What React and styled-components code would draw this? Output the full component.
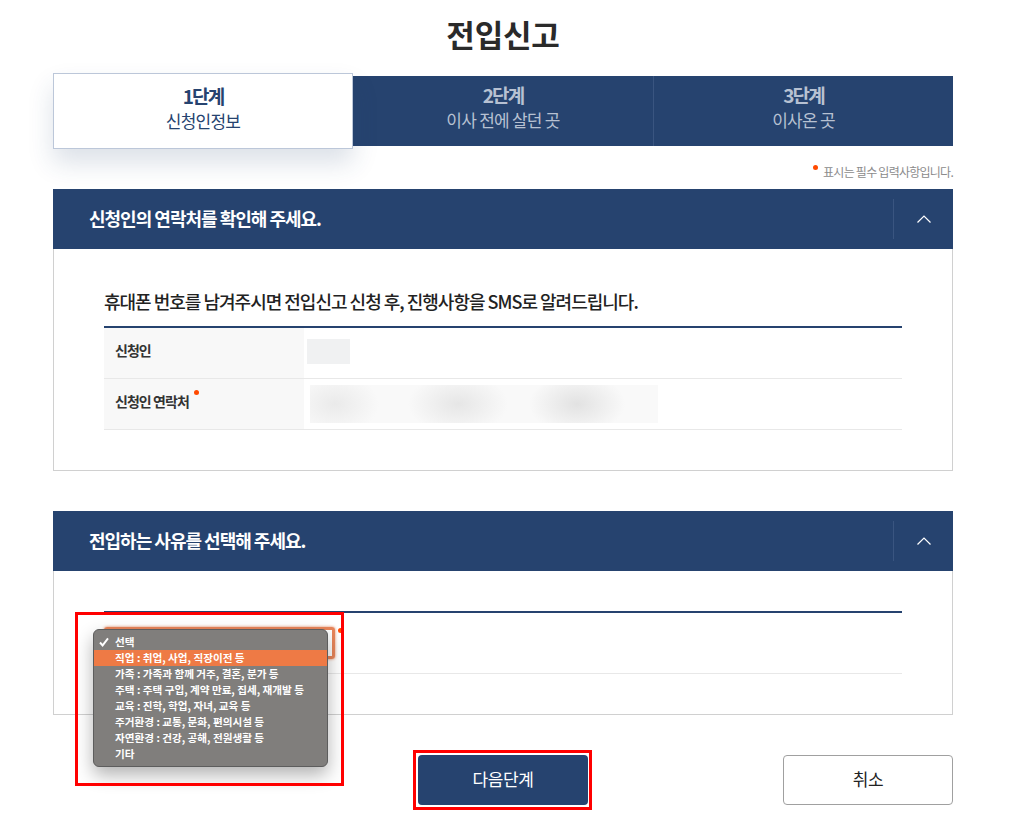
import styled, { createGlobalStyle } from 'styled-components';

const NAVY = '#26436f';
const FONT = `'Noto Sans CJK KR', 'Noto Sans', sans-serif`;

const STEPS = [
  { id: 1, label: '1단계', desc: '신청인정보' },
  { id: 2, label: '2단계', desc: '이사 전에 살던 곳' },
  { id: 3, label: '3단계', desc: '이사온 곳' },
];

const REASONS = [
  '직업 : 취업, 사업, 직장이전 등',
  '가족 : 가족과 함께 거주, 결혼, 분가 등',
  '주택 : 주택 구입, 계약 만료, 집세, 재개발 등',
  '교육 : 진학, 학업, 자녀, 교육 등',
  '주거환경 : 교통, 문화, 편의시설 등',
  '자연환경 : 건강, 공해, 전원생활 등',
  '기타',
];

function Chevron() {
  return (
    <svg width="16" height="10" viewBox="0 0 16 10" fill="none">
      <path d="M1.5 8.5 L8 2 L14.5 8.5" stroke="#fff" strokeWidth="1.2" />
    </svg>
  );
}

function CheckMark() {
  return (
    <svg width="10" height="10" viewBox="0 0 10 10" fill="none">
      <path d="M1 5.5 L3.6 8.4 L9 1.4" stroke="#fff" strokeWidth="1.9" />
    </svg>
  );
}

function SectionHeader({ children }) {
  return (
    <Header>
      <HeaderTitle>{children}</HeaderTitle>
      <Toggle>
        <Chevron />
      </Toggle>
    </Header>
  );
}

export default function App() {
  return (
    <Page>
      <GlobalStyle />
      <Title>전입신고</Title>

      <Steps>
        {STEPS.map((s) => (
          <Step key={s.id} $active={s.id === 1}>
            <StepLabel>{s.label}</StepLabel>
            <StepDesc>{s.desc}</StepDesc>
          </Step>
        ))}
      </Steps>

      <Legend>
        <Dot />
        표시는 필수 입력사항입니다.
      </Legend>

      <Section>
        <SectionHeader>신청인의 연락처를 확인해 주세요.</SectionHeader>
        <ContactBody>
          <Lead>휴대폰 번호를 남겨주시면 전입신고 신청 후, 진행사항을 SMS로 알려드립니다.</Lead>
          <Table>
            <Row>
              <Th>신청인</Th>
              <Td>
                <BlurName />
              </Td>
            </Row>
            <Row>
              <Th>
                신청인 연락처
                <LabelDot />
              </Th>
              <Td>
                <BlurPhone />
              </Td>
            </Row>
          </Table>
        </ContactBody>
      </Section>

      <ReasonSection>
        <SectionHeader>전입하는 사유를 선택해 주세요.</SectionHeader>
        <ReasonBody>
          <ReasonRow>
            <SelectBox />
            <SelectDot />
            <Menu>
              <MenuItem>
                <Check>
                  <CheckMark />
                </Check>
                선택
              </MenuItem>
              {REASONS.map((r, i) => (
                <MenuItem key={r} $hover={i === 0}>
                  {r}
                </MenuItem>
              ))}
            </Menu>
            <MenuMark />
          </ReasonRow>
        </ReasonBody>
      </ReasonSection>

      <Actions>
        <NextButton>
          다음단계
          <NextMark />
        </NextButton>
        <CancelButton>취소</CancelButton>
      </Actions>
    </Page>
  );
}

const GlobalStyle = createGlobalStyle`
  html, body {
    margin: 0;
    background: #fff;
    font-family: ${FONT};
    color: #222;
  }
`;

const Page = styled.div`
  width: 900px;
  height: 834px;
  margin-left: 53px;
`;

const Title = styled.h1`
  margin: 0;
  height: 73px;
  padding-top: 11px;
  box-sizing: border-box;
  font-size: 31px;
  line-height: 46px;
  font-weight: 700;
  letter-spacing: -0.2px;
  text-align: center;
  color: #2a2a2a;
`;

const Steps = styled.div`
  display: flex;
  align-items: center;
  height: 76px;
`;

const Step = styled.div`
  box-sizing: border-box;
  width: 300px;
  display: flex;
  flex-direction: column;
  align-items: center;
  height: ${(p) => (p.$active ? '76px' : '70px')};
  padding-top: ${(p) => (p.$active ? '8px' : '5px')};
  background: ${(p) => (p.$active ? '#fff' : NAVY)};
  color: ${(p) => (p.$active ? NAVY : '#b7c1d2')};
  border: ${(p) => (p.$active ? '1px solid #bcc7d9' : 'none')};
  border-left: ${(p) => (p.$active ? '1px solid #bcc7d9' : '1px solid #3a5580')};
  box-shadow: ${(p) => (p.$active ? '0 14px 24px rgba(38, 67, 111, 0.16)' : 'none')};
  position: ${(p) => (p.$active ? 'relative' : 'static')};
  &:nth-child(2) {
    border-left: none;
  }
`;

const StepLabel = styled.strong`
  font-size: 19px;
  line-height: 27px;
  font-weight: 700;
  letter-spacing: -1.9px;
`;

const StepDesc = styled.span`
  font-size: 17px;
  line-height: 23px;
  font-weight: 400;
  letter-spacing: -0.75px;
`;

const Legend = styled.p`
  margin: 0;
  height: 40px;
  padding-top: 14px;
  box-sizing: border-box;
  display: flex;
  justify-content: flex-end;
  font-size: 12px;
  line-height: 18px;
  letter-spacing: -0.75px;
  color: #8b8b8b;
  white-space: nowrap;
`;

const Dot = styled.i`
  width: 5px;
  height: 5px;
  margin: 2px 5px 0 0;
  border-radius: 50%;
  background: #ff4a00;
`;

const Section = styled.section`
  display: block;
`;

const ReasonSection = styled(Section)`
  margin-top: 40px;
`;

const Header = styled.div`
  height: 60px;
  display: flex;
  align-items: center;
  justify-content: space-between;
  background: ${NAVY};
  padding-left: 36px;
  color: #fff;
`;

const HeaderTitle = styled.h2`
  margin: 0 0 3px;
  font-size: 18px;
  line-height: 26px;
  font-weight: 700;
  letter-spacing: -1px;
  color: #fff;
`;

const Toggle = styled.div`
  width: 59px;
  height: 40px;
  display: flex;
  align-items: center;
  justify-content: center;
  border-left: 1px solid #3a5580;
`;

const ContactBody = styled.div`
  height: 222px;
  box-sizing: border-box;
  padding: 38px 50px 0;
  border: 1px solid #d0d0d0;
  border-top: none;
`;

const Lead = styled.h3`
  margin: 0;
  height: 39px;
  font-size: 18px;
  line-height: 28px;
  font-weight: 500;
  letter-spacing: -1px;
  color: #222;
  white-space: nowrap;
`;

const Table = styled.div`
  border-top: 2px solid ${NAVY};
`;

const Row = styled.div`
  display: flex;
  height: 51px;
  box-sizing: border-box;
  border-bottom: 1px solid #e8e8e8;
`;

const Th = styled.div`
  position: relative;
  width: 200px;
  flex: none;
  box-sizing: border-box;
  padding: 12px 0 0 11px;
  background: #f8f8f8;
  font-size: 14px;
  line-height: 20px;
  font-weight: 700;
  letter-spacing: -0.95px;
  color: #333;
`;

const LabelDot = styled.i`
  position: absolute;
  left: 90px;
  top: 11px;
  width: 5px;
  height: 5px;
  border-radius: 50%;
  background: #ff4a00;
`;

const Td = styled.div`
  flex: 1;
  display: flex;
  align-items: center;
`;

const BlurName = styled.div`
  width: 43px;
  height: 25px;
  margin: 0 0 3px 3px;
  background: #f0f1f2;
  filter: blur(0.6px);
`;

const BlurPhone = styled.div`
  width: 348px;
  height: 38px;
  margin: 0 0 0 6px;
  background:
    radial-gradient(ellipse 48px 30px at 267px 19px, #e2e2e2, transparent),
    radial-gradient(ellipse 50px 30px at 148px 19px, #e6e6e6, transparent),
    radial-gradient(ellipse 44px 30px at 25px 19px, #eaeaea, transparent),
    #f9f9f9;
`;

const ReasonBody = styled.div`
  height: 144px;
  box-sizing: border-box;
  padding: 40px 50px 0;
  border: 1px solid #d0d0d0;
  border-top: none;
`;

const ReasonRow = styled.div`
  position: relative;
  height: 63px;
  box-sizing: border-box;
  border-top: 2px solid ${NAVY};
  border-bottom: 1px solid #e8e8e8;
  padding-top: 14px;
`;

const SelectBox = styled.div`
  width: 231px;
  height: 32px;
  box-sizing: border-box;
  border: 3px solid #e8855a;
  border-radius: 3px;
  box-shadow: 0 0 3px #e8855a;
`;

const SelectDot = styled(Dot)`
  position: absolute;
  left: 234px;
  top: 15px;
  margin: 0;
`;

const Menu = styled.div`
  position: absolute;
  left: -11px;
  top: 16px;
  width: 235px;
  height: 138px;
  box-sizing: border-box;
  padding: 4px 0;
  border: 1px solid #5d5d5d;
  border-radius: 6px;
  background: #807e7c;
  box-shadow: 0 8px 18px rgba(0, 0, 0, 0.3);
`;

const MenuItem = styled.div`
  position: relative;
  height: 16px;
  padding-left: 21px;
  font-size: 10.6px;
  line-height: 16px;
  font-weight: 700;
  color: #fff;
  white-space: nowrap;
  background: ${(p) => (p.$hover ? '#ee7a45' : 'transparent')};
`;

const Check = styled.span`
  position: absolute;
  left: 5px;
  top: 3px;
  line-height: 0;
`;

const MenuMark = styled.div`
  position: absolute;
  left: -29px;
  top: -1px;
  width: 269px;
  height: 174px;
  box-sizing: border-box;
  border: 3px solid #f00;
  pointer-events: none;
`;

const Actions = styled.div`
  position: relative;
  display: flex;
  justify-content: flex-end;
  height: 50px;
  margin-top: 40px;
`;

const BaseButton = styled.button`
  width: 170px;
  height: 50px;
  box-sizing: border-box;
  border-radius: 4px;
  padding: 0 0 3px;
  font-family: ${FONT};
  font-size: 17px;
  letter-spacing: -0.4px;
`;

const NextButton = styled(BaseButton)`
  position: absolute;
  left: 365px;
  top: 0;
  border: none;
  background: ${NAVY};
  color: #fff;
`;

const NextMark = styled.span`
  position: absolute;
  left: -5px;
  top: -5px;
  width: 179px;
  height: 60px;
  box-sizing: border-box;
  border: 3px solid #f00;
`;

const CancelButton = styled(BaseButton)`
  border: 1px solid #a0a0a0;
  background: #fff;
  color: #222;
`;
